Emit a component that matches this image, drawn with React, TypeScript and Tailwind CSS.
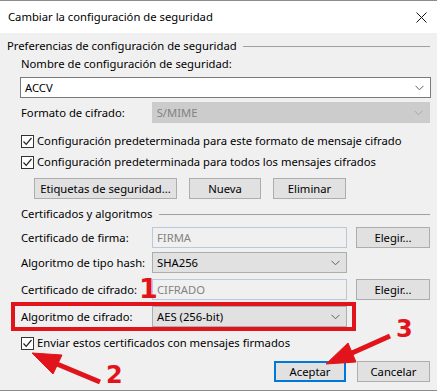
import React from "react";

const font = { fontFamily: '"Segoe UI", "Noto Sans", sans-serif' };

function Chevron({ light }: { light?: boolean }) {
  return (
    <svg width="9" height="6" viewBox="0 0 9 6" className="shrink-0">
      <path d="M0.5 0.8 L4.5 4.8 L8.5 0.8" fill="none" stroke={light ? "#a8a8a8" : "#606060"} strokeWidth="1" />
    </svg>
  );
}

function Check({ label }: { label: string }) {
  return (
    <div className="flex items-center h-[16px] ml-px gap-[3px]">
      <div className="w-[13px] h-[13px] border border-[#333333] bg-white flex items-center justify-center">
        <svg width="11" height="11" viewBox="0 0 11 11">
          <path d="M1.5 5.5 L4.2 8.3 L9.5 2" fill="none" stroke="#222" strokeWidth="1.2" />
        </svg>
      </div>
      <span>{label}</span>
    </div>
  );
}

function Btn({ label, w, primary }: { label: string; w: string; primary?: boolean }) {
  return (
    <div
      className={`${w} h-[21px] bg-[#e1e1e1] flex items-center justify-center ${
        primary ? "border-2 border-[#0078d7]" : "border border-[#adadad]"
      }`}
    >
      {label}
    </div>
  );
}

function Section({ title }: { title: string }) {
  return (
    <div className="flex items-center h-[16px] gap-[4px]">
      <span className="whitespace-nowrap">{title}</span>
      <div className="flex-1 h-px bg-[#a0a0a0] ml-[2px]" />
    </div>
  );
}

function Row({ label, children }: { label: string; children: React.ReactNode }) {
  return (
    <div className="flex items-center h-[21px]">
      <span className="w-[132px] pl-px whitespace-nowrap">{label}</span>
      {children}
    </div>
  );
}

export default function App() {
  return (
    <div
      className="relative w-[437px] h-[391px] bg-[#f0f0f0] border-t border-b border-[#8c8c8c] text-[11.25px] text-black overflow-hidden leading-none"
      style={font}
    >
      {/* title bar */}
      <div className="h-[32px] bg-white flex items-center justify-between pl-[8px] pr-[10px]">
        <span>Cambiar la configuración de seguridad</span>
        <svg width="11" height="11" viewBox="0 0 11 11">
          <path d="M0.5 0.5 L10.5 10.5 M10.5 0.5 L0.5 10.5" stroke="#111" strokeWidth="1" />
        </svg>
      </div>

      <div className="pl-[7px] pr-[7px]">
        <div className="mt-[5px]">
          <Section title="Preferencias de configuración de seguridad" />
        </div>

        <div className="pl-[13px]">
          <div className="h-[16px] flex items-center mt-[2px] pl-px">Nombre de configuración de seguridad:</div>

          <div className="mt-[5px] h-[21px] w-[411px] bg-white border border-[#7a7a7a] flex items-center justify-between pl-[4px] pr-[6px]">
            <span>ACCV</span>
            <Chevron />
          </div>

          <div className="mt-[4px]">
            <Row label="Formato de cifrado:">
              <div className="w-[279px] h-[21px] bg-[#cccccc] border border-[#cccccc] flex items-center justify-between pl-[4px] pr-[6px] text-[#838383]">
                <span>S/MIME</span>
                <Chevron light />
              </div>
            </Row>
          </div>

          <div className="mt-[10px]">
            <Check label="Configuración predeterminada para este formato de mensaje cifrado" />
          </div>
          <div className="mt-[5px]">
            <Check label="Configuración predeterminada para todos los mensajes cifrados" />
          </div>

          <div className="mt-[8px] flex ml-[14px] gap-[12px]">
            <Btn label="Etiquetas de seguridad..." w="w-[143px]" />
            <Btn label="Nueva" w="w-[72px]" />
            <Btn label="Eliminar" w="w-[73px]" />
          </div>
        </div>

        <div className="mt-[7px] pl-[14px]">
          <Section title="Certificados y algoritmos" />
        </div>

        <div className="pl-[13px]">
          <div className="mt-[5px]">
            <Row label="Certificado de firma:">
              <div className="w-[195px] h-[21px] bg-[#f0f0f0] border border-[#b9c9d9] flex items-center pl-[4px] text-[#838383]">
                FIRMA
              </div>
              <div className="ml-[9px]">
                <Btn label="Elegir..." w="w-[74px]" />
              </div>
            </Row>
          </div>

          <div className="mt-[4px]">
            <Row label="Algoritmo de tipo hash:">
              <div className="w-[195px] h-[21px] bg-[#e1e1e1] border border-[#adadad] flex items-center justify-between pl-[4px] pr-[6px]">
                <span>SHA256</span>
                <Chevron />
              </div>
            </Row>
          </div>

          <div className="mt-[6px]">
            <Row label="Certificado de cifrado:">
              <div className="w-[195px] h-[21px] bg-[#f0f0f0] border border-[#b9c9d9] flex items-center pl-[4px] text-[#838383]">
                CIFRADO
              </div>
              <div className="ml-[9px]">
                <Btn label="Elegir..." w="w-[74px]" />
              </div>
            </Row>
          </div>

          <div className="mt-[6px] relative">
            <Row label="Algoritmo de cifrado:">
              <div className="w-[195px] h-[21px] bg-[#e1e1e1] border border-[#adadad] flex items-center justify-between pl-[4px] pr-[6px]">
                <span>AES (256-bit)</span>
                <Chevron />
              </div>
            </Row>
            {/* red highlight */}
            <div className="absolute left-[-9px] top-[-4px] w-[345px] h-[29px] border-[4px] border-[#e2141b]" />
          </div>

          <div className="mt-[8px]">
            <Check label="Enviar estos certificados con mensajes firmados" />
          </div>

          <div className="mt-[10px] flex justify-end gap-[11px] w-[410px]">
            <Btn label="Aceptar" w="w-[72px]" primary />
            <Btn label="Cancelar" w="w-[73px]" />
          </div>
        </div>
      </div>

      {/* annotation overlay */}
      <svg className="absolute left-0 top-0 pointer-events-none" width="437" height="391" viewBox="0 0 437 391">
        <g fill="#e2141b" stroke="#e2141b">
          <polygon points="32,352 62,354 53,373" />
          <line x1="57" y1="363" x2="100" y2="381" strokeWidth="5" />
          <polygon points="326,363 348,342 356,361" />
          <line x1="352" y1="352" x2="390" y2="335" strokeWidth="5" />
        </g>
      </svg>
      <span
        className="absolute left-[139px] top-[274px] text-[27px] font-bold text-[#e2141b] leading-none"
        style={{ fontFamily: '"DejaVu Sans", sans-serif' }}
      >
        1
      </span>
      <span
        className="absolute left-[106px] top-[362px] text-[24px] font-bold text-[#e2141b] leading-none"
        style={{ fontFamily: '"DejaVu Sans", sans-serif' }}
      >
        2
      </span>
      <span
        className="absolute left-[396px] top-[316px] text-[24px] font-bold text-[#e2141b] leading-none"
        style={{ fontFamily: '"DejaVu Sans", sans-serif' }}
      >
        3
      </span>
    </div>
  );
}
